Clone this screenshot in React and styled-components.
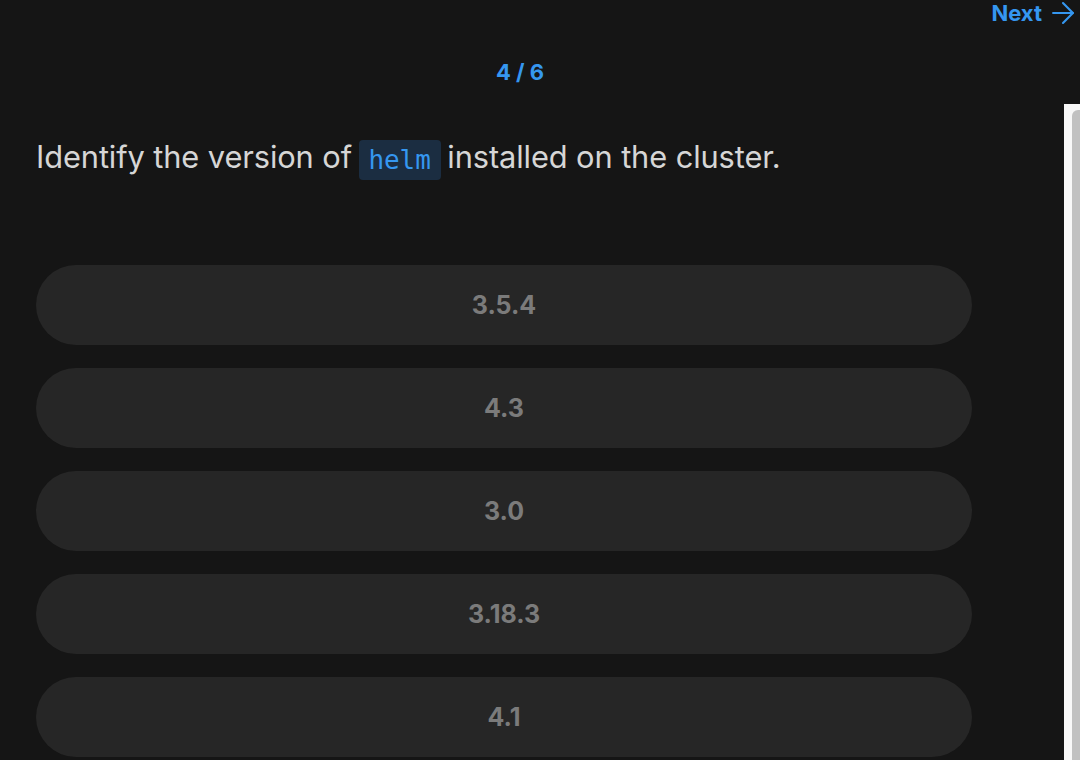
import React from "react";
import styled, { createGlobalStyle } from "styled-components";
import { ArrowRight } from "lucide-react";

const options = ["3.5.4", "4.3", "3.0", "3.18.3", "4.1"];

const App = () => {
  return (
    <Page>
      <GlobalStyle />
      <TopBar>
        <NextButton>
          Next
          <ArrowRight size={34} strokeWidth={1.5} />
        </NextButton>
      </TopBar>
      <Progress>4 / 6</Progress>
      <Body>
        <Content>
          <Question>
            Identify the version of <Code>helm</Code> installed on the cluster.
          </Question>
          <Options>
            {options.map((opt) => (
              <Option key={opt}>{opt}</Option>
            ))}
          </Options>
        </Content>
        <Scrollbar>
          <Thumb />
        </Scrollbar>
      </Body>
    </Page>
  );
};

export default App;

const GlobalStyle = createGlobalStyle`
  html, body {
    margin: 0;
    padding: 0;
    background: #151515;
    overflow: hidden;
  }
  body {
    font-family: Inter, "Noto Sans", sans-serif;
  }
`;

const Page = styled.div`
  width: 1080px;
  height: 760px;
  background: #151515;
  display: flex;
  flex-direction: column;
  overflow: hidden;
`;

const TopBar = styled.div`
  display: flex;
  justify-content: flex-end;
  height: 26px;
  padding-right: 0;
`;

const NextButton = styled.button`
  display: flex;
  align-items: center;
  gap: 4px;
  background: none;
  border: none;
  padding: 0;
  height: 26px;
  color: #3597f0;
  font-family: Inter, sans-serif;
  font-weight: 700;
  font-size: 22px;
  cursor: pointer;
`;

const Progress = styled.div`
  width: 1040px;
  text-align: center;
  margin-top: 32px;
  color: #3597f0;
  font-weight: 700;
  font-size: 22px;
  line-height: 28px;
`;

const Body = styled.div`
  flex: 1;
  display: flex;
  margin-top: 18px;
`;

const Content = styled.div`
  flex: 1;
  padding: 30px 0 0 36px;
`;

const Question = styled.div`
  color: #d6d6d6;
  font-size: 30.8px;
  line-height: 46px;
  letter-spacing: -0.1px;
`;

const Code = styled.code`
  display: inline-block;
  background: #1b2d41;
  color: #3597f0;
  font-family: "DejaVu Sans Mono", "Liberation Mono", monospace;
  font-size: 26px;
  line-height: 40px;
  padding: 0 10px;
  border-radius: 4px;
  vertical-align: middle;
  margin: 0 -2px;
`;

const Options = styled.div`
  display: flex;
  flex-direction: column;
  gap: 23px;
  margin-top: 85px;
  width: 936px;
`;

const Option = styled.button`
  height: 80px;
  border: none;
  border-radius: 40px;
  background: #262626;
  color: #7b7b7b;
  font-family: Inter, sans-serif;
  font-weight: 700;
  font-size: 25px;
  cursor: pointer;
  flex-shrink: 0;
`;

const Scrollbar = styled.div`
  width: 16px;
  background: #f8f8f8;
  display: flex;
  justify-content: flex-end;
  padding-top: 6px;
`;

const Thumb = styled.div`
  width: 8px;
  height: 100%;
  background: #c1c1c1;
  border-top-left-radius: 6px;
`;
